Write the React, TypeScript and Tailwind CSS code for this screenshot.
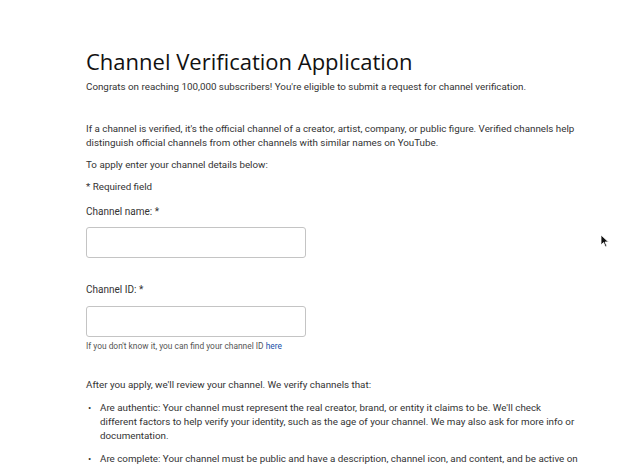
import React from 'react';

const body = { fontFamily: 'Roboto, "Liberation Sans", sans-serif' };

function Field({ label, gap, help }: { label: string; gap: string; help?: boolean }) {
  return (
    <div className="flex flex-col">
      <label className="text-[10px] leading-[12px] text-[#333]">{label}</label>
      <div className={`${gap} h-[31px] w-[220px] rounded-[3px] border border-[#c4c4c4] bg-white`} />
      {help && (
        <p className="mt-[4px] text-[8.4px] leading-[10px] text-[#555]">
          If you don&apos;t know it, you can find your channel ID <span className="text-[#1a4fa8]">here</span>
        </p>
      )}
    </div>
  );
}

export default function App() {
  return (
    <div className="relative h-[468px] w-[640px] overflow-hidden bg-white" style={body}>
      <div className="flex w-[586px] flex-col pl-[86px] pt-[46px]">
        <h1
          className="text-[22px] leading-[30px] text-[#111]"
          style={{ fontFamily: '"Open Sans", Roboto, sans-serif' }}
        >
          Channel Verification Application
        </h1>
        <p className="mt-[4px] text-[9.8px] leading-[14px] text-[#333]">
          Congrats on reaching 100,000 subscribers! You&apos;re eligible to submit a request for channel verification.
        </p>
        <p className="mt-[28px] text-[9.8px] leading-[14px] text-[#333]">
          If a channel is verified, it&apos;s the official channel of a creator, artist, company, or public figure. Verified channels help distinguish official channels from other channels with similar names on YouTube.
        </p>
        <p className="mt-[8px] text-[9.8px] leading-[14px] text-[#333]">To apply enter your channel details below:</p>
        <p className="mt-[8px] text-[9.8px] leading-[14px] text-[#333]">* Required field</p>
        <div className="mt-[12px]">
          <Field label="Channel name: *" gap="mt-[9px]" />
        </div>
        <div className="mt-[26px]">
          <Field label="Channel ID: *" gap="mt-[10px]" help />
        </div>
        <p className="mt-[27px] text-[9.8px] leading-[14px] text-[#333]">
          After you apply, we&apos;ll review your channel. We verify channels that:
        </p>
        <ul className="mt-[9px] flex flex-col gap-[9px] pr-[8px] text-[9.8px] leading-[14px] text-[#333]">
          <li className="flex gap-[6px]">
            <span className="w-[8px] shrink-0 pl-[2px]">•</span>
            <span>
              Are authentic: Your channel must represent the real creator, brand, or entity it claims to be. We&apos;ll check different factors to help verify your identity, such as the age of your channel. We may also ask for more info or documentation.
            </span>
          </li>
          <li className="flex gap-[6px]">
            <span className="w-[8px] shrink-0 pl-[2px]">•</span>
            <span>
              Are complete: Your channel must be public and have a description, channel icon, and content, and be active on YouTube.
            </span>
          </li>
        </ul>
      </div>
      <svg className="absolute left-[600px] top-[234px]" width="10" height="14" viewBox="0 0 10 14">
        <path d="M1 1 L1 11 L3.5 8.5 L5.5 13 L7 12.3 L5 8 L8.5 8 Z" fill="#111" stroke="#fff" strokeWidth="0.8" />
      </svg>
    </div>
  );
}
